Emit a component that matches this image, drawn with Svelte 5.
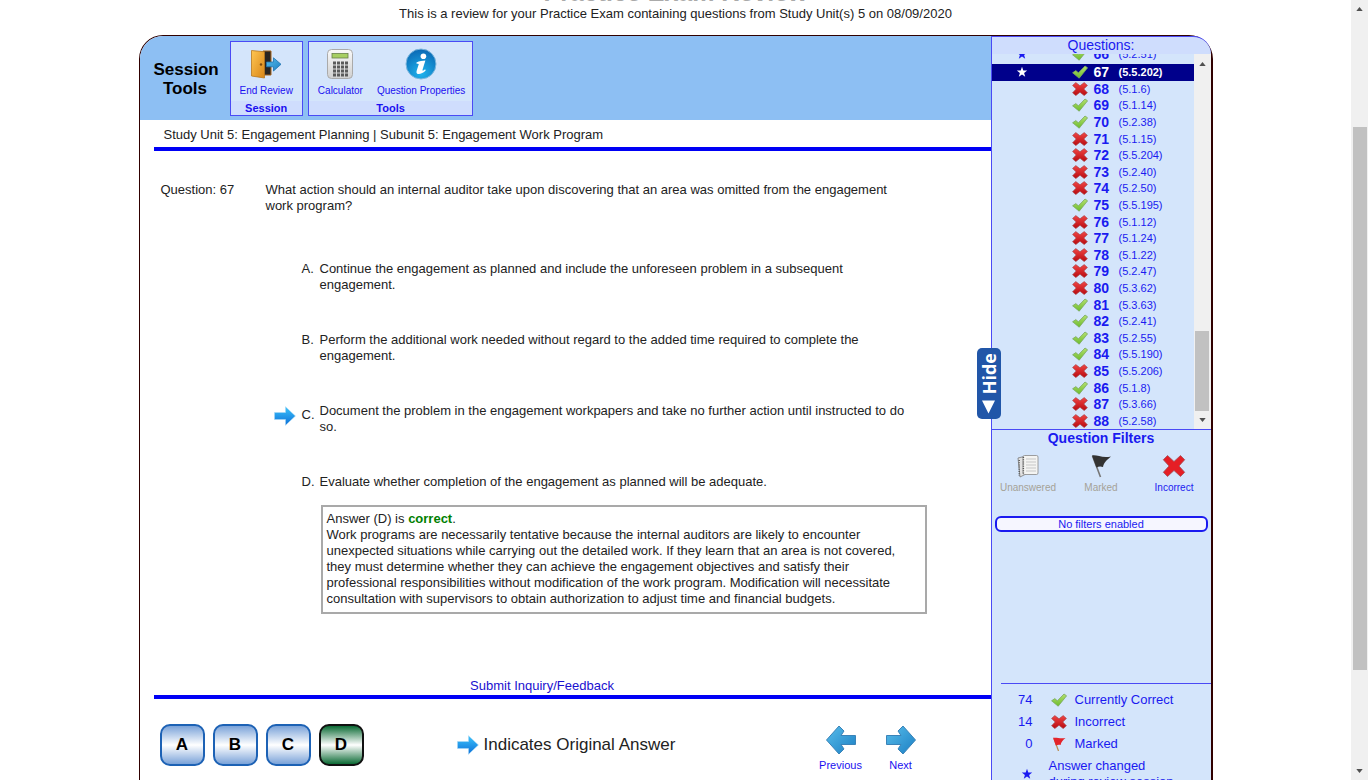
<script>
  const rows = [
    [67, '5.5.202', 1], [68, '5.1.6', 0], [69, '5.1.14', 1], [70, '5.2.38', 1], [71, '5.1.15', 0],
    [72, '5.5.204', 0], [73, '5.2.40', 0], [74, '5.2.50', 0], [75, '5.5.195', 1], [76, '5.1.12', 0],
    [77, '5.1.24', 0], [78, '5.1.22', 0], [79, '5.2.47', 0], [80, '5.3.62', 0], [81, '5.3.63', 1],
    [82, '5.2.41', 1], [83, '5.2.55', 1], [84, '5.5.190', 1], [85, '5.5.206', 0], [86, '5.1.8', 1],
    [87, '5.3.66', 0], [88, '5.2.58', 0]
  ];
  const current = 67;
  const choices = [
    ['A', 'Continue the engagement as planned and include the unforeseen problem in a subsequent engagement.'],
    ['B', 'Perform the additional work needed without regard to the added time required to complete the engagement.'],
    ['C', 'Document the problem in the engagement workpapers and take no further action until instructed to do so.'],
    ['D', 'Evaluate whether completion of the engagement as planned will be adequate.']
  ];
  const original = 'C';
  const correct = 'D';
</script>

<svg class="defs" width="0" height="0" aria-hidden="true">
  <defs>
    <linearGradient id="green" x1="0" y1="0" x2="0" y2="1"><stop offset="0" stop-color="#b4e070" /><stop offset="1" stop-color="#6cbc2c" /></linearGradient>
    <linearGradient id="red" x1="0" y1="0" x2="0" y2="1"><stop offset="0" stop-color="#f04545" /><stop offset="1" stop-color="#b80a10" /></linearGradient>
    <linearGradient id="sky" x1="0" y1="0" x2="0" y2="1"><stop offset="0" stop-color="#3cc4fb" /><stop offset="1" stop-color="#0d6fd8" /></linearGradient>
    <linearGradient id="steel" x1="0" y1="0" x2="1" y2="1"><stop offset="0" stop-color="#58bdea" /><stop offset="1" stop-color="#1b7fc4" /></linearGradient>
    <linearGradient id="door" x1="0" y1="0" x2="1" y2="1"><stop offset="0" stop-color="#ffc653" /><stop offset="1" stop-color="#d98617" /></linearGradient>
    <linearGradient id="shell" x1="0" y1="0" x2="0" y2="1"><stop offset="0" stop-color="#fafafa" /><stop offset="1" stop-color="#cfcfcf" /></linearGradient>
    <radialGradient id="orb" cx="0.5" cy="0.8" r="0.8"><stop offset="0" stop-color="#1fb4ee" /><stop offset="1" stop-color="#0a68b4" /></radialGradient>
  </defs>
</svg>

{#snippet tick()}
  <svg class="mark" viewBox="0 0 16 14" aria-hidden="true"><path d="M.6 7.8 3.8 5.6 6.4 7.8 13 1 15.6 2.8 7.2 13.2Z" fill="url(#green)" stroke="#7aa860" stroke-width=".8" stroke-linejoin="round" /></svg>
{/snippet}
{#snippet cross()}
  <svg class="mark" viewBox="0 0 16 14" aria-hidden="true"><path d="M3.8.6 8 3.8 12.2.6 15.4 3.4 11.8 7 15.4 10.8 12.2 13.6 8 10.2 3.8 13.6.6 10.8 4.2 7 .6 3.4Z" fill="url(#red)" stroke="#a8484c" stroke-width=".7" stroke-linejoin="round" /></svg>
{/snippet}
{#snippet star()}
  <svg class="star" viewBox="0 0 12 12" aria-hidden="true"><path d="M6 .8 7.3 4.5H11.2L8.1 6.9 9.2 10.8 6 8.5 2.8 10.8 3.9 6.9.8 4.5H4.7Z" fill="currentColor" /></svg>
{/snippet}
{#snippet arrow()}
  <svg class="arrow" viewBox="0 0 22 20" aria-hidden="true"><path d="M.5 6.5H11.5V.7L21.4 10 11.5 19.3V13.5H.5Z" fill="url(#sky)" stroke="#a8d6f5" stroke-width=".6" /></svg>
{/snippet}

<div class="page">
  <div class="view">
    <header>
      <h1>Practice Exam Review</h1>
      <p>This is a review for your Practice Exam containing questions from Study Unit(s) 5 on 08/09/2020</p>
    </header>

    <div class="exam">
      <main>
        <div class="toolbar">
          <h2>Session<br />Tools</h2>
          <section class="group">
            <div class="tools">
              <button class="tool">
                <svg viewBox="0 0 32 32" aria-hidden="true">
                  <path d="M13 3H21V27H13Z" fill="#292522" stroke="#a8661c" />
                  <path d="M1.5 2.5 14.5 3.8V30L1.5 28Z" fill="url(#door)" stroke="#b87820" stroke-width=".8" />
                  <circle cx="11" cy="16.5" r="1.2" fill="#7b4a10" />
                  <path d="M16.5 14H23.5V9.8L31 16.3 23.5 23V18.8H16.5Z" fill="url(#steel)" stroke="#1e74b0" stroke-width=".8" />
                </svg>
                End Review
              </button>
            </div>
            <h3>Session</h3>
          </section>
          <section class="group">
            <div class="tools">
              <button class="tool">
                <svg viewBox="0 0 32 32" aria-hidden="true">
                  <rect x="3.5" y="1.5" width="25" height="29" rx="4" fill="url(#shell)" stroke="#aaa" />
                  <rect x="8" y="5.5" width="16" height="4.5" fill="#a7cf63" stroke="#66804a" stroke-width=".8" />
                  <path d="M9 15H24M9 19H24M9 23H24M9 27H24" stroke="#5a5a5a" stroke-width="3" stroke-dasharray="3 1" />
                </svg>
                Calculator
              </button>
              <button class="tool">
                <svg viewBox="0 0 32 32" aria-hidden="true">
                  <circle cx="16" cy="16" r="15" fill="url(#orb)" stroke="#7db7dd" stroke-width="1" />
                  <circle cx="18.4" cy="8.2" r="2.8" fill="#fff" />
                  <path d="M11.5 14.4C14.5 13 17.5 12.6 20.4 12.5L17.6 21.6C17.2 23.2 18 23 20 21.2L20.8 22.2C17 26.6 10.4 27.8 11.6 23L13.8 15.9 11.4 15.6Z" fill="#fff" />
                </svg>
                Question Properties
              </button>
            </div>
            <h3>Tools</h3>
          </section>
        </div>

        <div class="unit">Study Unit 5: Engagement Planning | Subunit 5: Engagement Work Program</div>

        <div class="question">
          <div class="number">Question: 67</div>
          <div class="body">
            <p class="stem">What action should an internal auditor take upon discovering that an area was omitted from the engagement work program?</p>
            <ol>
              {#each choices as [letter, text]}
                <li class:original={letter === original}>
                  <span class="pick">{#if letter === original}{@render arrow()}{/if}</span>
                  <span class="letter">{letter}.</span>
                  <span>{text}</span>
                </li>
              {/each}
            </ol>
            <div class="explain">
              Answer (D) is <b>correct</b>.<br />
              Work programs are necessarily tentative because the internal auditors are likely to encounter unexpected situations while carrying out the detailed work. If they learn that an area is not covered, they must determine whether they can achieve the engagement objectives and satisfy their professional responsibilities without modification of the work program. Modification will necessitate consultation with supervisors to obtain authorization to adjust time and financial budgets.
            </div>
          </div>
        </div>

        <div class="feedback"><a href="#feedback">Submit Inquiry/Feedback</a></div>

        <footer>
          <div class="letters">
            {#each choices as [letter]}
              <button class:right={letter === correct}>{letter}</button>
            {/each}
          </div>
          <div class="key">{@render arrow()} Indicates Original Answer</div>
          <nav>
            <button>
              <svg viewBox="0 0 32 32" aria-hidden="true"><path d="M1.5 16 14 2 19 7 16 11.5H30.5V20.5H16L19 25 14 30Z" fill="url(#steel)" stroke="#3a83b8" /></svg>
              Previous
            </button>
            <button>
              <svg viewBox="0 0 32 32" aria-hidden="true"><path d="M30.5 16 18 2 13 7 16 11.5H1.5V20.5H16L13 25 18 30Z" fill="url(#steel)" stroke="#3a83b8" /></svg>
              Next
            </button>
          </nav>
        </footer>
      </main>

      <aside>
        <button class="hide">
          <span>Hide</span>
          <svg viewBox="0 0 14 14" aria-hidden="true"><path d="M0 0H14L7 14Z" fill="#fff" /></svg>
        </button>
        <h2>Questions:</h2>
        <div class="scroller">
          <div class="rows">
            <div class="row cut">{@render star()}{@render tick()}<b>66</b><span>(5.2.51)</span></div>
            {#each rows as [n, ref, ok]}
              <div class="row" class:current={n === current}>
                {#if n === current}{@render star()}{/if}
                {#if ok}{@render tick()}{:else}{@render cross()}{/if}
                <b>{n}</b><span>({ref})</span>
              </div>
            {/each}
          </div>
          <div class="bar">
            <svg viewBox="0 0 8 5" aria-hidden="true"><path d="M0 5 4 0 8 5Z" fill="#505050" /></svg>
            <i></i>
            <svg viewBox="0 0 8 5" aria-hidden="true"><path d="M0 0H8L4 5Z" fill="#505050" /></svg>
          </div>
        </div>
        <section class="filters">
          <h3>Question Filters</h3>
          <div class="choices">
            <button disabled>
              <svg viewBox="0 0 24 24" aria-hidden="true">
                <path d="M2 4 10 2V20L4 23Z" fill="#e2e2e2" stroke="#777" stroke-width=".8" />
                <rect x="7" y="1.5" width="15" height="19" rx="1.5" fill="#f4f4f2" stroke="#888" stroke-width=".8" />
                <path d="M10 5H20M10 8H20M10 11H20M10 14H20M10 17H20" stroke="#bbb" stroke-width=".8" />
                <path d="M7.4 3V20M3.2 6V22" stroke="#555" stroke-width="1.4" stroke-dasharray="1 1.2" />
              </svg>
              Unanswered
            </button>
            <button disabled>
              <svg viewBox="0 0 24 24" aria-hidden="true">
                <path d="M3.5 2 11.5 23" stroke="#777" stroke-width="1.6" />
                <path d="M3 1.5C8 .5 13 4.5 22 2.5 18 6 15 8 14 13 11.5 12 9.5 12.5 7.4 13.5Z" fill="#333" />
              </svg>
              Marked
            </button>
            <button>
              <svg viewBox="0 0 24 24" aria-hidden="true"><path d="M5.5 1.5 12 7.5 18.5 1.5 22.7 5.7 17 12 22.7 18.3 18.5 22.5 12 16.5 5.5 22.5 1.3 18.3 7 12 1.3 5.7Z" fill="#e51e25" stroke="#a05058" stroke-width=".8" /></svg>
              Incorrect
            </button>
          </div>
          <div class="status">No filters enabled</div>
        </section>
        <section class="legend">
          <div><b>74</b>{@render tick()}<span>Currently Correct</span></div>
          <div><b>14</b>{@render cross()}<span>Incorrect</span></div>
          <div>
            <b>0</b>
            <svg class="mark" viewBox="0 0 16 14" aria-hidden="true"><path d="M3 1.5 7.5 14" stroke="#b98a4a" stroke-width="1.2" /><path d="M2 .8C6 .2 9 2 14.5 1 12 3 10 5 9.6 8 8 7.4 6.5 7.8 4.8 8.4Z" fill="#e3242b" /></svg>
            <span>Marked</span>
          </div>
          <div class="changed">{@render star()}<span>Answer changed<br />during review session</span></div>
        </section>
      </aside>
    </div>
  </div>

  <div class="bar window">
    <svg viewBox="0 0 8 5" aria-hidden="true"><path d="M0 5 4 0 8 5Z" fill="#505050" /></svg>
    <i></i>
    <svg viewBox="0 0 8 5" aria-hidden="true"><path d="M0 0H8L4 5Z" fill="#505050" /></svg>
  </div>
</div>

<style>
  :global(body) { background: #fff; }
  .defs { position: absolute; }
  .page {
    display: flex;
    height: 100vh;
    overflow: hidden;
    font: 13px/16px "Liberation Sans", Arial, sans-serif;
    color: #222;
  }
  .page *, .page { box-sizing: border-box; }
  h1, h2, h3, p, ol { margin: 0; padding: 0; }
  button { font: inherit; color: inherit; background: none; border: 0; padding: 0; cursor: pointer; }
  .view { flex: 1; min-width: 0; }
  header {
    display: flex;
    flex-direction: column;
    justify-content: flex-end;
    height: 35px;
    padding-bottom: 13px;
    overflow: hidden;
    text-align: center;
  }
  h1 { font-size: 25px; line-height: 28px; color: #aaa; }
  .exam {
    display: flex;
    max-width: 1074px;
    margin: 0 auto;
    border: 1px solid #300000;
    border-right-width: 2px;
    border-radius: 24px;
  }
  main { flex: 1; min-width: 0; }
  .toolbar {
    display: flex;
    gap: 5px;
    height: 84px;
    padding: 5px 0 4px 14px;
    background: #8dbff3;
    border-radius: 23px 0 0 0;
  }
  .toolbar h2 {
    width: 63px;
    margin-right: 8px;
    padding-top: 19px;
    text-align: center;
    font-size: 17px;
    line-height: 19px;
    color: #000;
  }
  .group {
    display: flex;
    flex-direction: column;
    border: 1px solid #4a4af5;
    background: #d4e5fb;
    color: #1a10f0;
    text-align: center;
  }
  .tools { display: flex; flex: 1; gap: 14px; padding: 6px 9px 0; }
  .group + .group .tools { padding-right: 7px; }
  .tool { display: flex; flex-direction: column; align-items: center; gap: 4px; font-size: 10px; line-height: 14px; }
  .tool svg { width: 32px; height: 32px; }
  .group h3 { background: #cfddfd; font-size: 11px; line-height: 14px; }
  .unit { margin-left: 14px; padding: 7px 10px 4px; border-bottom: 4px solid #0000f5; }
  .question { display: flex; min-height: 527px; padding: 31px 60px 0 21px; }
  .number { width: 105px; flex: none; }
  .body { flex: 1; min-width: 0; }
  .stem { max-width: 640px; }
  ol { list-style: none; margin-top: 47px; }
  li { display: grid; grid-template-columns: 36px 18px minmax(0, 600px); align-items: start; margin-bottom: 39px; }
  li:last-child { margin-bottom: 15px; }
  .pick { display: flex; padding-left: 8px; }
  .original .pick { align-items: center; height: 26px; }
  .original .letter { line-height: 24px; }
  .arrow { width: 22px; height: 20px; flex: none; }
  .explain {
    max-width: 606px;
    margin-left: 55px;
    padding: 4px 18px 5px 4px;
    border: 2px solid #a9a9a9;
  }
  .explain b { color: #008000; }
  .feedback { margin-left: 14px; padding-bottom: 1px; border-bottom: 4px solid #0000f5; text-align: center; }
  a { color: #1a10d0; text-decoration: none; }
  .feedback a { display: inline-block; margin-right: 60px; }
  footer { display: flex; align-items: flex-start; padding: 25px 68px 30px 20px; }
  .letters { display: flex; gap: 8px; }
  .letters button {
    width: 45px;
    height: 42px;
    border: 2px solid #1d62b5;
    border-radius: 10px;
    background: linear-gradient(#7ba3d9, #fff 50%, #7ba3d9);
    font-weight: bold;
    font-size: 17px;
    color: #000;
  }
  .letters .right { border-color: #111; background: linear-gradient(#0c6b35, #fff 50%, #0c6b35); }
  .key { display: flex; align-items: center; gap: 5px; height: 42px; margin-left: 93px; font-size: 17px; white-space: nowrap; }
  nav { display: flex; gap: 16px; margin-left: auto; }
  nav button { display: flex; flex-direction: column; align-items: center; gap: 1px; width: 44px; font-size: 11px; color: #1a10f0; }
  nav svg { width: 32px; height: 32px; }

  aside {
    position: relative;
    display: flex;
    flex-direction: column;
    width: 220px;
    flex: none;
    border-left: 1px solid #4a4af5;
    border-radius: 0 23px 0 0;
    background: #d4e5fb;
    color: #1a1af0;
  }
  aside h2 { height: 18px; border-top: 1px solid #4a4af5; border-radius: 0 23px 0 0; background: #cfddfd; text-align: center; font-size: 14px; font-weight: normal; line-height: 17px; }
  .hide {
    position: absolute;
    left: -15px;
    top: 312px;
    display: flex;
    flex-direction: column;
    align-items: center;
    justify-content: center;
    gap: 5px;
    width: 24px;
    height: 71px;
    border-radius: 5px;
    background: #2156a8;
    color: #fff;
    font: bold 18px/24px "Open Sans", sans-serif;
  }
  .hide span { writing-mode: vertical-rl; rotate: 180deg; }
  .hide svg { width: 13px; height: 14px; flex: none; }
  .scroller { display: flex; height: 376px; border-bottom: 1px solid #4a4af5; }
  .rows { display: flex; flex-direction: column; flex: 1; }
  .row {
    display: grid;
    grid-template-columns: 56px 22px 25px 1fr;
    align-items: center;
    flex: 1;
    min-height: 0;
    padding-left: 24px;
    font-size: 11px;
  }
  .row .star { grid-column: 1; }
  .row .mark { grid-column: 2; }
  .row b { font-size: 14px; }
  .cut { flex: 0 0 10px; padding-bottom: 2px; overflow: hidden; align-content: end; }
  .current { background: #00008b; color: #fff; font-weight: bold; }
  .mark { width: 16px; height: 14px; }
  .star { width: 12px; height: 12px; }
  .bar { display: flex; flex-direction: column; align-items: center; justify-content: space-between; width: 17px; padding: 8px 0 7px; background: #f0f0f0; }
  .bar svg { width: 7px; height: 4px; }
  .bar i { width: 14px; height: 80px; margin: auto 0 7px; background: #c1c1c1; }
  .window { padding: 7px 0; }
  .window i { flex: 1; max-height: 543px; margin: 116px 0 auto; }
  .filters { text-align: center; }
  .filters h3 { font-size: 14px; }
  .choices { display: grid; grid-template-columns: repeat(3, 1fr); padding-top: 8px; font-size: 10px; line-height: 14px; }
  .choices button { display: flex; flex-direction: column; align-items: center; gap: 3px; }
  .choices button:disabled { color: #a5a297; }
  .choices svg { width: 24px; height: 24px; }
  .status { margin: 21px 3px 0; border: 2px solid #1a1af0; border-radius: 6px; background: #f6f6ff; font-size: 11px; line-height: 12px; }
  .legend { margin: auto 0 0 9px; padding: 5px 0 13px; border-top: 1px solid #4a4af5; line-height: 22px; }
  .legend div { display: grid; grid-template-columns: 32px 34px 1fr; align-items: center; }
  .legend b { font-weight: normal; text-align: right; }
  .legend .mark { justify-self: end; }
  .legend span { padding-left: 8px; }
  .legend .changed { grid-template-columns: 32px 1fr; column-gap: 8px; line-height: 16px; padding-top: 3px; }
  .changed .star { justify-self: end; }
</style>
